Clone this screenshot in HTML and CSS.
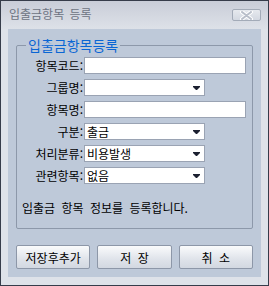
FILE: index.html
```html
<!DOCTYPE html>
<html lang="ko">
<head>
<meta charset="utf-8">
<link rel="stylesheet" href="styles.css">
</head>
<body>
<div class="window">
  <div class="titlebar">
    <span class="title">입출금항목 등록</span>
    <span class="close">
      <svg width="17" height="9" viewBox="0 0 17 9">
        <path d="M4 1 L13 8 M13 1 L4 8" stroke="#ffffff" stroke-width="4" stroke-linecap="round"/>
        <path d="M4 1 L13 8 M13 1 L4 8" stroke="#b9bfca" stroke-width="2" stroke-linecap="round"/>
      </svg>
    </span>
  </div>
  <div class="panel">
    <fieldset class="group">
      <legend class="legend">입출금항목등록</legend>
      <div class="form">
        <label class="lbl">항목코드:</label>
        <div class="field text"></div>
        <label class="lbl">그룹명:</label>
        <div class="field select"><span class="val"></span><svg class="arrow" width="7" height="4" viewBox="0 0 7 4"><path d="M0 0 H7 V1 L4 4 H3 L0 1 Z" fill="#1c2030"/></svg></div>
        <label class="lbl">항목명:</label>
        <div class="field text"></div>
        <label class="lbl">구분:</label>
        <div class="field select"><span class="val">출금</span><svg class="arrow" width="7" height="4" viewBox="0 0 7 4"><path d="M0 0 H7 V1 L4 4 H3 L0 1 Z" fill="#1c2030"/></svg></div>
        <label class="lbl">처리분류:</label>
        <div class="field select"><span class="val">비용발생</span><svg class="arrow" width="7" height="4" viewBox="0 0 7 4"><path d="M0 0 H7 V1 L4 4 H3 L0 1 Z" fill="#1c2030"/></svg></div>
        <label class="lbl">관련항목:</label>
        <div class="field select"><span class="val">없음</span><svg class="arrow" width="7" height="4" viewBox="0 0 7 4"><path d="M0 0 H7 V1 L4 4 H3 L0 1 Z" fill="#1c2030"/></svg></div>
      </div>
      <p class="msg">입출금 항목 정보를 등록합니다.</p>
    </fieldset>
    <div class="buttons">
      <button class="btn">저장후추가</button>
      <button class="btn">저 장</button>
      <button class="btn">취 소</button>
    </div>
  </div>
</div>
</body>
</html>
```

FILE: styles.css
```css
* { box-sizing: border-box; }
html, body { margin: 0; padding: 0; }
body {
  font-family: "Noto Sans CJK KR", "Noto Sans", sans-serif;
  font-size: 12px;
  color: #000;
  background: #dee2e9;
}
.window {
  width: 269px;
  height: 286px;
  border: 1px solid #363c4a;
  background: #dee2e9;
  display: flex;
  flex-direction: column;
}
.titlebar {
  height: 28px;
  flex: none;
  display: flex;
  align-items: center;
  justify-content: space-between;
  padding: 0 7px 2px 8px;
  background: linear-gradient(#c9cdd8, #dde1e8);
}
.title {
  color: #6d7382;
  font-size: 12px;
  line-height: 14px;
  word-spacing: 2px;
}
.close {
  width: 29px;
  height: 12px;
  border: 1px solid #a3abb8;
  border-radius: 2px;
  background: linear-gradient(#e6e9ee, #d3d8e1);
  display: flex;
  align-items: center;
  justify-content: center;
  margin-top: 2px;
}
.close svg { display: block; }
.panel {
  margin: 0 7px;
  height: 248px;
  flex: none;
  background: #bec9d9;
  padding: 8px;
  display: flex;
  flex-direction: column;
}
.group {
  margin: 0;
  padding: 0 0 12px 0;
  border: 1px solid #8d98aa;
  border-radius: 2px;
  min-width: 0;
}
.legend {
  margin-left: 9px;
  padding: 0 2px;
  font-size: 14px;
  line-height: 16px;
  color: #0a66d4;
}
.form {
  margin-top: 4px;
  display: grid;
  grid-template-columns: 67px auto;
  row-gap: 5px;
  align-items: center;
  justify-items: start;
}
.lbl {
  justify-self: end;
  font-size: 12px;
  line-height: 17px;
  padding-right: 1px;
}
.field {
  height: 17px;
  background: #fff;
  border: 1px solid #9aa3b3;
  display: flex;
  align-items: center;
  line-height: 15px;
  font-size: 12px;
}
.text { width: 162px; }
.select {
  width: 121px;
  justify-content: space-between;
  padding: 0 4px 0 2px;
}
.arrow { display: block; flex: none; }
.msg {
  margin: 16px 0 0 5px;
  font-size: 12px;
  line-height: 16px;
  word-spacing: 3px;
}
.buttons {
  margin-top: auto;
  display: grid;
  grid-template-columns: 1fr 1fr 1fr;
  column-gap: 7px;
}
.btn {
  height: 24px;
  border: 1px solid #8d97a8;
  border-radius: 2px;
  background: linear-gradient(#fafbfc, #dfe3ea 60%, #d2d8e1);
  font-family: "Noto Sans CJK KR", "Noto Sans", sans-serif;
  font-size: 12px;
  word-spacing: 3px;
  color: #000;
  padding: 0;
}
```
